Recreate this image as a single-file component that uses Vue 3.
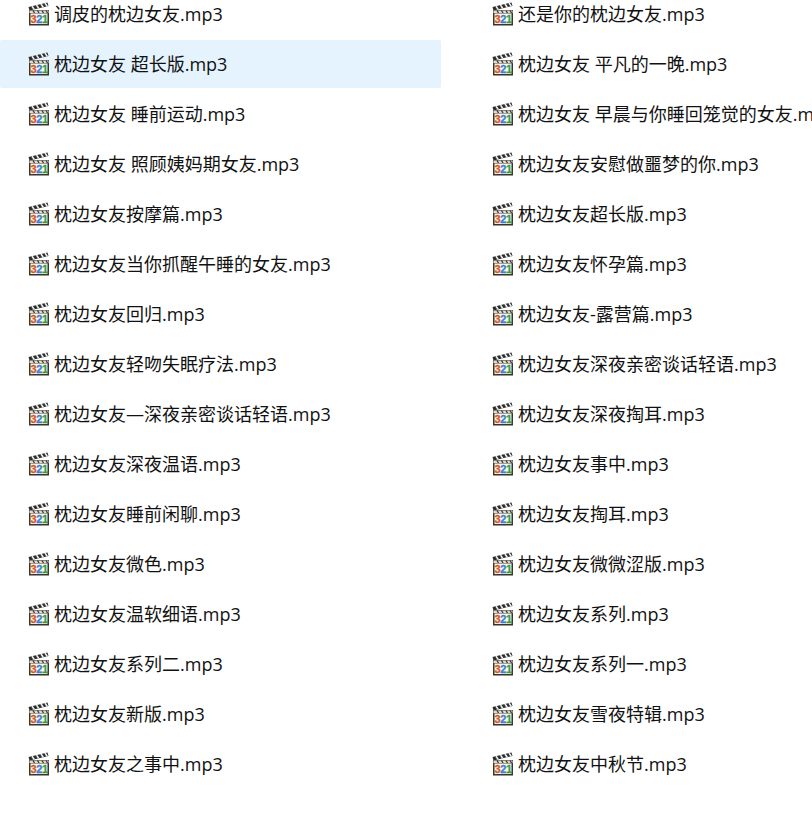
<template>
  <div class="file-list">
    <div
      v-for="(name, i) in files"
      :key="i"
      class="file-row"
      :class="{ active: i === 2 }"
    >
      <svg class="file-icon" width="24" height="24" viewBox="0 0 24 24">
        <!-- хлопушка -->
        <path d="M1.5 5 L20.5 0.5 L21.5 4 L2.5 8.5 Z" fill="#2e2e2e" />
        <path d="M5 4.2 L7.2 7.4 M9.5 3.1 L11.7 6.3 M14 2 L16.2 5.2 M18 1.1 L20.2 4.2" stroke="#f0f0f0" stroke-width="1.6" />
        <rect x="2" y="8" width="20" height="15.5" fill="#3a342c" />
        <rect x="2.5" y="8.5" width="19" height="2.6" fill="#e2dccd" />
        <path d="M6 8.5 L7.5 11 M10.5 8.5 L12 11 M15 8.5 L16.5 11 M19 8.5 L20.5 11" stroke="#3a3a3a" stroke-width="1.4" />
        <rect x="3.5" y="11.5" width="17" height="10.5" fill="#faf8f2" />
        <text x="3.6" y="21" class="num" fill="#d4581f" stroke="#d4581f">3</text>
        <text x="9.2" y="21" class="num" fill="#3f7fd0" stroke="#3f7fd0">2</text>
        <text x="15" y="21" class="num" fill="#3f9a3c" stroke="#3f9a3c">1</text>
      </svg>
      <span class="file-name">{{ name }}</span>
    </div>
  </div>
</template>

<script setup>
// порядок: слева направо, сверху вниз
const files = [
  '调皮的枕边女友.mp3', '还是你的枕边女友.mp3',
  '枕边女友 超长版.mp3', '枕边女友 平凡的一晚.mp3',
  '枕边女友 睡前运动.mp3', '枕边女友 早晨与你睡回笼觉的女友.mp3',
  '枕边女友 照顾姨妈期女友.mp3', '枕边女友安慰做噩梦的你.mp3',
  '枕边女友按摩篇.mp3', '枕边女友超长版.mp3',
  '枕边女友当你抓醒午睡的女友.mp3', '枕边女友怀孕篇.mp3',
  '枕边女友回归.mp3', '枕边女友-露营篇.mp3',
  '枕边女友轻吻失眠疗法.mp3', '枕边女友深夜亲密谈话轻语.mp3',
  '枕边女友—深夜亲密谈话轻语.mp3', '枕边女友深夜掏耳.mp3',
  '枕边女友深夜温语.mp3', '枕边女友事中.mp3',
  '枕边女友睡前闲聊.mp3', '枕边女友掏耳.mp3',
  '枕边女友微色.mp3', '枕边女友微微涩版.mp3',
  '枕边女友温软细语.mp3', '枕边女友系列.mp3',
  '枕边女友系列二.mp3', '枕边女友系列一.mp3',
  '枕边女友新版.mp3', '枕边女友雪夜特辑.mp3',
  '枕边女友之事中.mp3', '枕边女友中秋节.mp3'
]
</script>

<style>
html,
body {
  margin: 0;
  background: #fff;
  overflow: hidden;
}
</style>

<style scoped>
.file-list {
  display: grid;
  grid-template-columns: 441px 441px;
  column-gap: 23px;
  row-gap: 2px;
  margin-top: -10px;
  width: 812px;
  height: 841px;
  overflow: hidden;
  align-content: start;
  font-family: "Open Sans", "Noto Sans CJK SC", sans-serif;
}
.file-row {
  display: flex;
  align-items: center;
  height: 48px;
  padding-left: 27px;
  box-sizing: border-box;
  border-radius: 2px;
  white-space: nowrap;
}
.file-row.active {
  background: #e5f3ff;
}
.file-icon {
  flex: none;
  margin-right: 3px;
}
.num {
  font-family: "Liberation Sans", sans-serif;
  font-size: 11px;
  font-weight: 700;
  stroke-width: 0.3px;
}
.file-name {
  font-size: 18px;
  color: #111;
  line-height: 24px;
}
</style>
